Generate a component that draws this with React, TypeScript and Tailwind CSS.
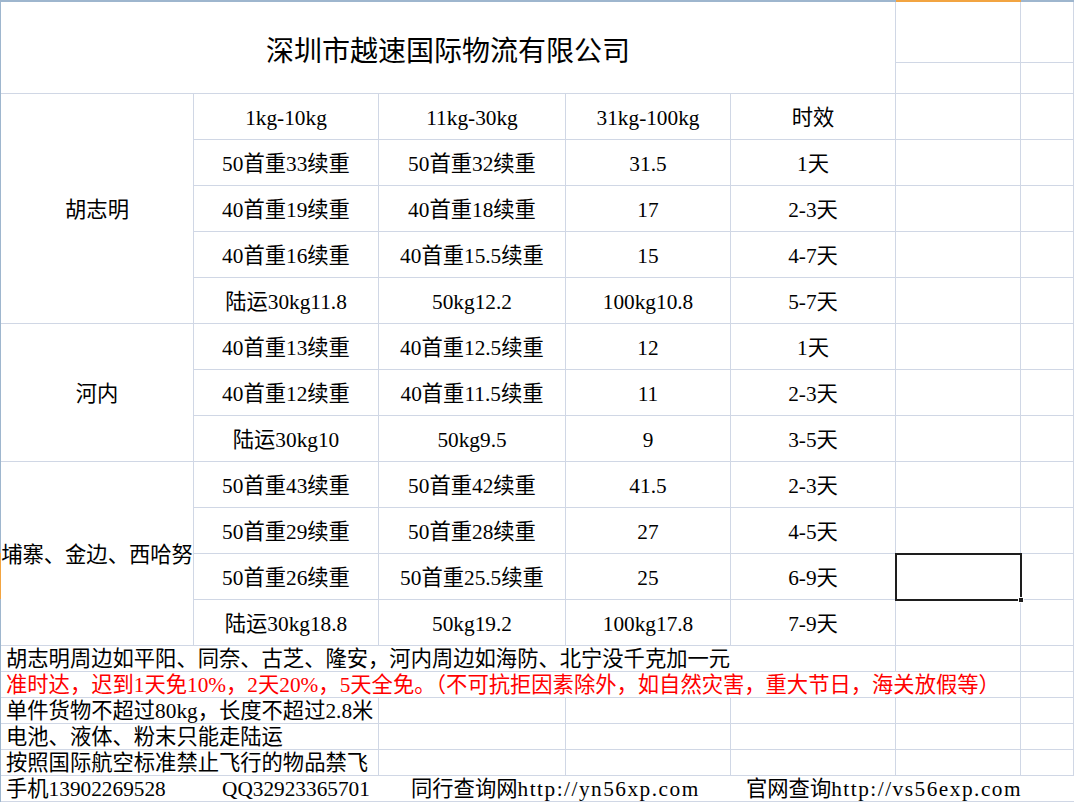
import React from 'react';

// 表格数据：每组第一行带地区名，跨行显示
interface Group {
  region: string;
  span: string;
  rows: string[][];
}

const groups: Group[] = [
  {
    region: '胡志明',
    span: 'row-span-5',
    rows: [
      ['1kg-10kg', '11kg-30kg', '31kg-100kg', '时效'],
      ['50首重33续重', '50首重32续重', '31.5', '1天'],
      ['40首重19续重', '40首重18续重', '17', '2-3天'],
      ['40首重16续重', '40首重15.5续重', '15', '4-7天'],
      ['陆运30kg11.8', '50kg12.2', '100kg10.8', '5-7天'],
    ],
  },
  {
    region: '河内',
    span: 'row-span-3',
    rows: [
      ['40首重13续重', '40首重12.5续重', '12', '1天'],
      ['40首重12续重', '40首重11.5续重', '11', '2-3天'],
      ['陆运30kg10', '50kg9.5', '9', '3-5天'],
    ],
  },
  {
    region: '埔寨、金边、西哈努',
    span: 'row-span-4',
    rows: [
      ['50首重43续重', '50首重42续重', '41.5', '2-3天'],
      ['50首重29续重', '50首重28续重', '27', '4-5天'],
      ['50首重26续重', '50首重25.5续重', '25', '6-9天'],
      ['陆运30kg18.8', '50kg19.2', '100kg17.8', '7-9天'],
    ],
  },
];

const notes = ['单件货物不超过80kg，长度不超过2.8米', '电池、液体、粉末只能走陆运', '按照国际航空标准禁止飞行的物品禁飞'];

const line = 'border-r border-b border-[#d0d7e5]';
const center = `${line} flex items-center justify-center whitespace-nowrap overflow-hidden pt-[4px]`;
const left = `${line} flex items-center pl-[5px] pt-[3px] whitespace-nowrap`;

function Empty() {
  return <div className={line} />;
}

export default function App() {
  return (
    <div className="w-[1074px] h-[802px] overflow-hidden bg-white flex flex-col text-black font-['Liberation_Serif','Noto_Sans_CJK_SC',serif] text-[21.3px]">
      {/* 列头高亮 */}
      <div className="flex h-[2px] shrink-0">
        <div className="w-[896px] bg-[#9eb6ce]" />
        <div className="w-[125px] bg-[#f2a441]" />
        <div className="flex-1 bg-[#9eb6ce]" />
      </div>

      <div className="flex flex-1">
        {/* 行头高亮 */}
        <div className="w-px flex flex-col shrink-0">
          <div className="h-[551px] bg-[#9eb6ce]" />
          <div className="h-[46px] bg-[#f2a441]" />
          <div className="flex-1 bg-[#9eb6ce]" />
        </div>

        <div className="grid flex-1 grid-cols-[193px_185px_187px_165px_165px_125px_1fr] grid-rows-[61px_31px_repeat(12,46px)_repeat(6,26px)]">
          {/* 标题 */}
          <div className={`${line} col-span-5 row-span-2 flex items-center justify-center pt-[3px] font-['Noto_Sans_CJK_SC',sans-serif] text-[28px]`}>
            深圳市越速国际物流有限公司
          </div>
          <Empty />
          <Empty />
          <Empty />
          <Empty />

          {groups.map((g) =>
            g.rows.map((row, i) => (
              <React.Fragment key={g.region + i}>
                {i === 0 && <div className={`${center} ${g.span}`}>{g.region}</div>}
                {row.map((cell, j) => (
                  <div key={j} className={center}>
                    {cell}
                  </div>
                ))}
                {g.region === '埔寨、金边、西哈努' && i === 2 ? (
                  <div className={`${line} relative`}>
                    {/* 当前选中单元格 */}
                    <div className="absolute -left-px -top-px w-[127px] h-[48px] border-2 border-[#1e1e1e]">
                      <div className="absolute -right-[4px] -bottom-[4px] w-[6px] h-[6px] bg-[#1e1e1e] border border-white" />
                    </div>
                  </div>
                ) : (
                  <Empty />
                )}
                <Empty />
              </React.Fragment>
            ))
          )}

          {/* 备注 */}
          <div className={`${left} col-span-5`}>胡志明周边如平阳、同奈、古芝、隆安，河内周边如海防、北宁没千克加一元</div>
          <Empty />
          <Empty />
          <div className={`${left} col-span-6 text-[#ff0000]`}>
            准时达，迟到1天免10%，2天20%，5天全免。（不可抗拒因素除外，如自然灾害，重大节日，海关放假等）
          </div>
          <Empty />
          {notes.map((n) => (
            <React.Fragment key={n}>
              <div className={`${left} col-span-2`}>{n}</div>
              <Empty />
              <Empty />
              <Empty />
              <Empty />
              <Empty />
            </React.Fragment>
          ))}
          <div className={`${left} col-span-7 border-r-0`}>
            <span className="w-[216px] shrink-0">手机13902269528</span>
            <span className="w-[189px] shrink-0">QQ32923365701</span>
            <span className="w-[335px] shrink-0">
              同行查询网<span className="tracking-[1.5px]">http://yn56xp.com</span>
            </span>
            <span className="shrink-0">
              官网查询<span className="tracking-[1.5px]">http://vs56exp.com</span>
            </span>
          </div>
        </div>
      </div>
    </div>
  );
}
